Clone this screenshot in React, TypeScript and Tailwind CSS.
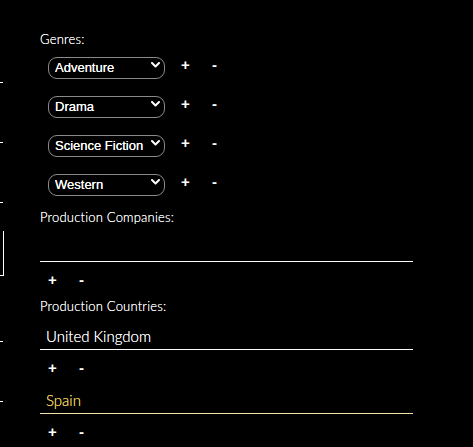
import { useState } from "react"

const genres = ["Adventure", "Drama", "Science Fiction", "Western"]
const genreOptions = ["Action", "Adventure", "Animation", "Comedy", "Drama", "Science Fiction", "Western"]

function PlusMinus({ className = "" }: { className?: string }) {
  return (
    <div className={`flex items-center font-['Liberation_Sans',Arial,sans-serif] text-[15px] font-bold text-white ${className}`}>
      <button type="button" className="w-[31px] text-left">+</button>
      <button type="button" className="text-left">-</button>
    </div>
  )
}

function GenreSelect({ value }: { value: string }) {
  const [v, setV] = useState(value)
  return (
    <div className="flex h-[22px] items-center">
      <div className="relative h-[22px] w-[117px]">
        <select
          value={v}
          onChange={(e) => setV(e.target.value)}
          className="h-full w-full appearance-none rounded-[9px] border border-[#8a8a8a] bg-black pl-[6px] pr-3 font-['Liberation_Sans',Arial,sans-serif] text-[13px] text-white outline-none [text-shadow:0_0_0.4px_white]"
        >
          {genreOptions.map((g) => (
            <option key={g}>{g}</option>
          ))}
        </select>
        <svg
          className="pointer-events-none absolute right-[5px] top-[8px]"
          width="9"
          height="6"
          viewBox="0 0 9 6"
          fill="none"
          stroke="white"
          strokeWidth="2"
          strokeLinecap="round"
          strokeLinejoin="round"
        >
          <path d="M1 1l3.5 3.5L8 1" />
        </svg>
      </div>
      <PlusMinus className="ml-[16px]" />
    </div>
  )
}

function Label({ children }: { children: string }) {
  return (
    <div className="flex h-5 items-center text-[13px] tracking-[0.2px] text-white [text-shadow:0_0_0.3px_white]">
      {children}
    </div>
  )
}

export default function App() {
  const [countries, setCountries] = useState(["United Kingdom", "Spain"])
  return (
    <div className="flex min-h-[447px] w-[473px] overflow-hidden bg-black font-['Lato','Noto_Sans',sans-serif] font-light">
      {/* clipped edge of the neighbouring column */}
      <div className="flex w-1 shrink-0 flex-col">
        <div className="mt-[82px] h-px w-[3px] bg-white" />
        <div className="mt-[59px] h-px w-[3px] bg-white" />
        <div className="mt-[59px] h-px w-[3px] bg-white" />
        <div className="mt-[28px] h-[45px] w-1 border-b border-r border-white" />
        <div className="mt-[65px] h-px w-[3px] bg-white" />
        <div className="mt-[59px] h-px w-[3px] bg-white" />
      </div>
      <div className="ml-9 flex w-[373px] flex-col pt-[30px]">
        <Label>Genres:</Label>
        <div className="mt-[4px] flex flex-col gap-[17px] pl-2">
          {genres.map((g) => (
            <GenreSelect key={g} value={g} />
          ))}
        </div>
        <div className="mt-[15px]">
          <Label>Production Companies:</Label>
        </div>
        <input className="mt-[6px] h-[28px] w-full border-b border-white bg-transparent px-[6px] text-[15px] text-white outline-none" />
        <PlusMinus className="h-9 pl-[8px]" />
        <div className="-mt-px">
          <Label>Production Countries:</Label>
        </div>
        <div className="mt-[5px] flex flex-col">
          {countries.map((c, i) => (
            <div key={i} className="flex flex-col">
              <input
                value={c}
                onChange={(e) => setCountries(countries.map((x, j) => (j === i ? e.target.value : x)))}
                className={`h-[28px] w-full border-b bg-transparent px-[6px] text-[15px] outline-none ${
                  i === countries.length - 1
                    ? "border-[#f3dfa8] text-[#f2d05a] caret-[#f2d05a] [text-shadow:0_0_0.3px_#f2d05a]"
                    : "border-white text-white [text-shadow:0_0_0.3px_white]"
                }`}
              />
              <PlusMinus className="h-9 pl-[8px]" />
            </div>
          ))}
        </div>
      </div>
    </div>
  )
}
